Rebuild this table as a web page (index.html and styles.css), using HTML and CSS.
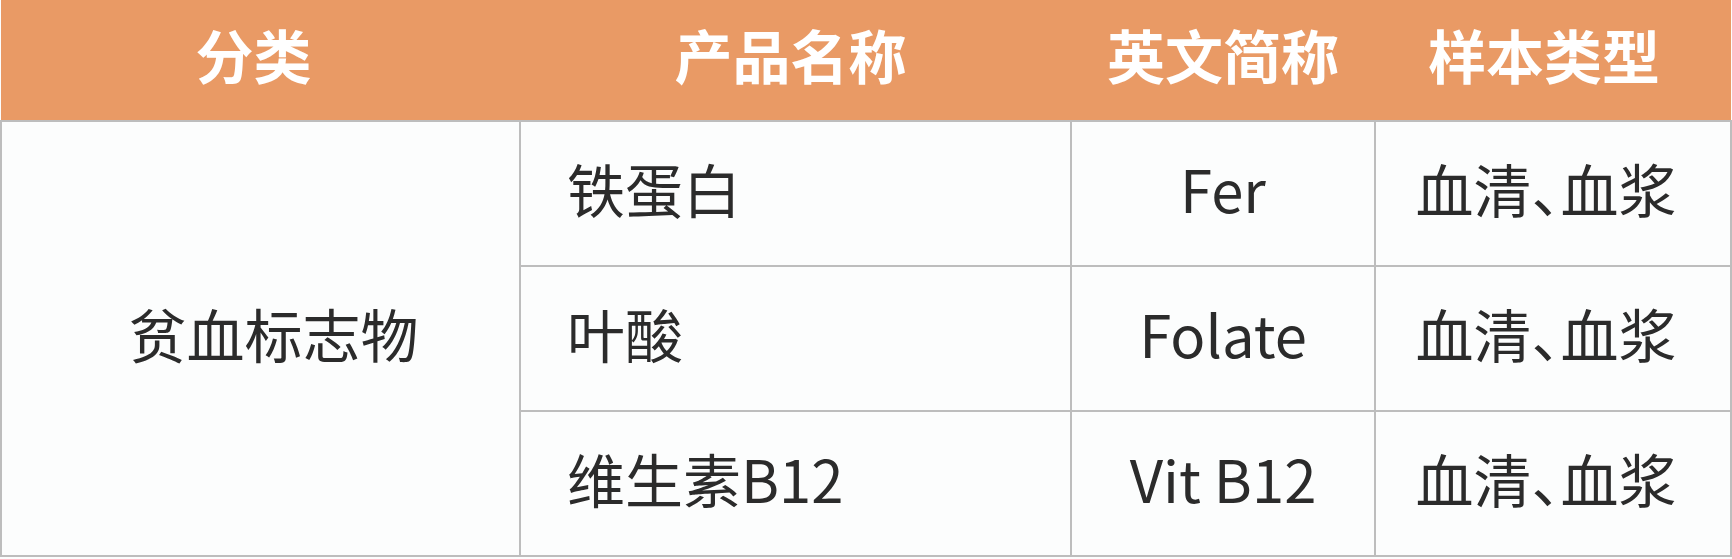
FILE: index.html
```html
<!DOCTYPE html>
<html lang="zh-CN">
<head>
<meta charset="utf-8">
<title>产品列表</title>
<link rel="stylesheet" href="styles.css">
</head>
<body>
<table class="product-table">
  <colgroup>
    <col class="col-cat">
    <col class="col-name">
    <col class="col-abbr">
    <col class="col-sample">
  </colgroup>
  <thead>
    <tr>
      <th class="h-cat">分类</th>
      <th class="h-name">产品名称</th>
      <th class="h-abbr">英文简称</th>
      <th class="h-sample">样本类型</th>
    </tr>
  </thead>
  <tbody>
    <tr>
      <td class="cat" rowspan="3">贫血标志物</td>
      <td class="name">铁蛋白</td>
      <td class="abbr">Fer</td>
      <td class="sample">血清<span class="punct">、</span>血浆</td>
    </tr>
    <tr>
      <td class="name">叶酸</td>
      <td class="abbr">Folate</td>
      <td class="sample">血清<span class="punct">、</span>血浆</td>
    </tr>
    <tr>
      <td class="name">维生素B12</td>
      <td class="abbr">Vit B12</td>
      <td class="sample">血清<span class="punct">、</span>血浆</td>
    </tr>
  </tbody>
</table>
</body>
</html>
```

FILE: styles.css
```css
html, body {
  margin: 0;
  padding: 0;
  background: #fcfdfd;
}

body {
  font-family: "Noto Sans CJK SC", "Noto Sans", sans-serif;
  color: #2b2b2b;
}

.product-table {
  width: 1730px;
  border-collapse: collapse;
  table-layout: fixed;
}

.col-cat { width: 519px; }
.col-name { width: 551px; }
.col-abbr { width: 304px; }
.col-sample { width: 356px; }

.product-table th {
  height: 108px;
  padding: 0 0 12px;
  background: #e99a65;
  color: #ffffff;
  font-size: 58px;
  font-weight: 700;
  text-align: center;
  vertical-align: middle;
  line-height: 1;
}

.product-table th.h-cat { padding-right: 14px; }
.product-table th.h-name { padding-right: 10px; }
.product-table th.h-sample { padding-right: 18px; }

.product-table td {
  height: 131px;
  padding: 0 0 12px;
  border: 2px solid #bdbdbd;
  font-size: 58px;
  font-weight: 400;
  line-height: 1;
  text-align: center;
  vertical-align: middle;
  background: #fcfdfd;
}

.product-table td.cat {
  padding-left: 26px;
}

.product-table td.name {
  text-align: left;
  padding-left: 46px;
}

.product-table td.sample {
  padding-right: 14px;
}

.punct {
  font-feature-settings: "halt";
}
```
